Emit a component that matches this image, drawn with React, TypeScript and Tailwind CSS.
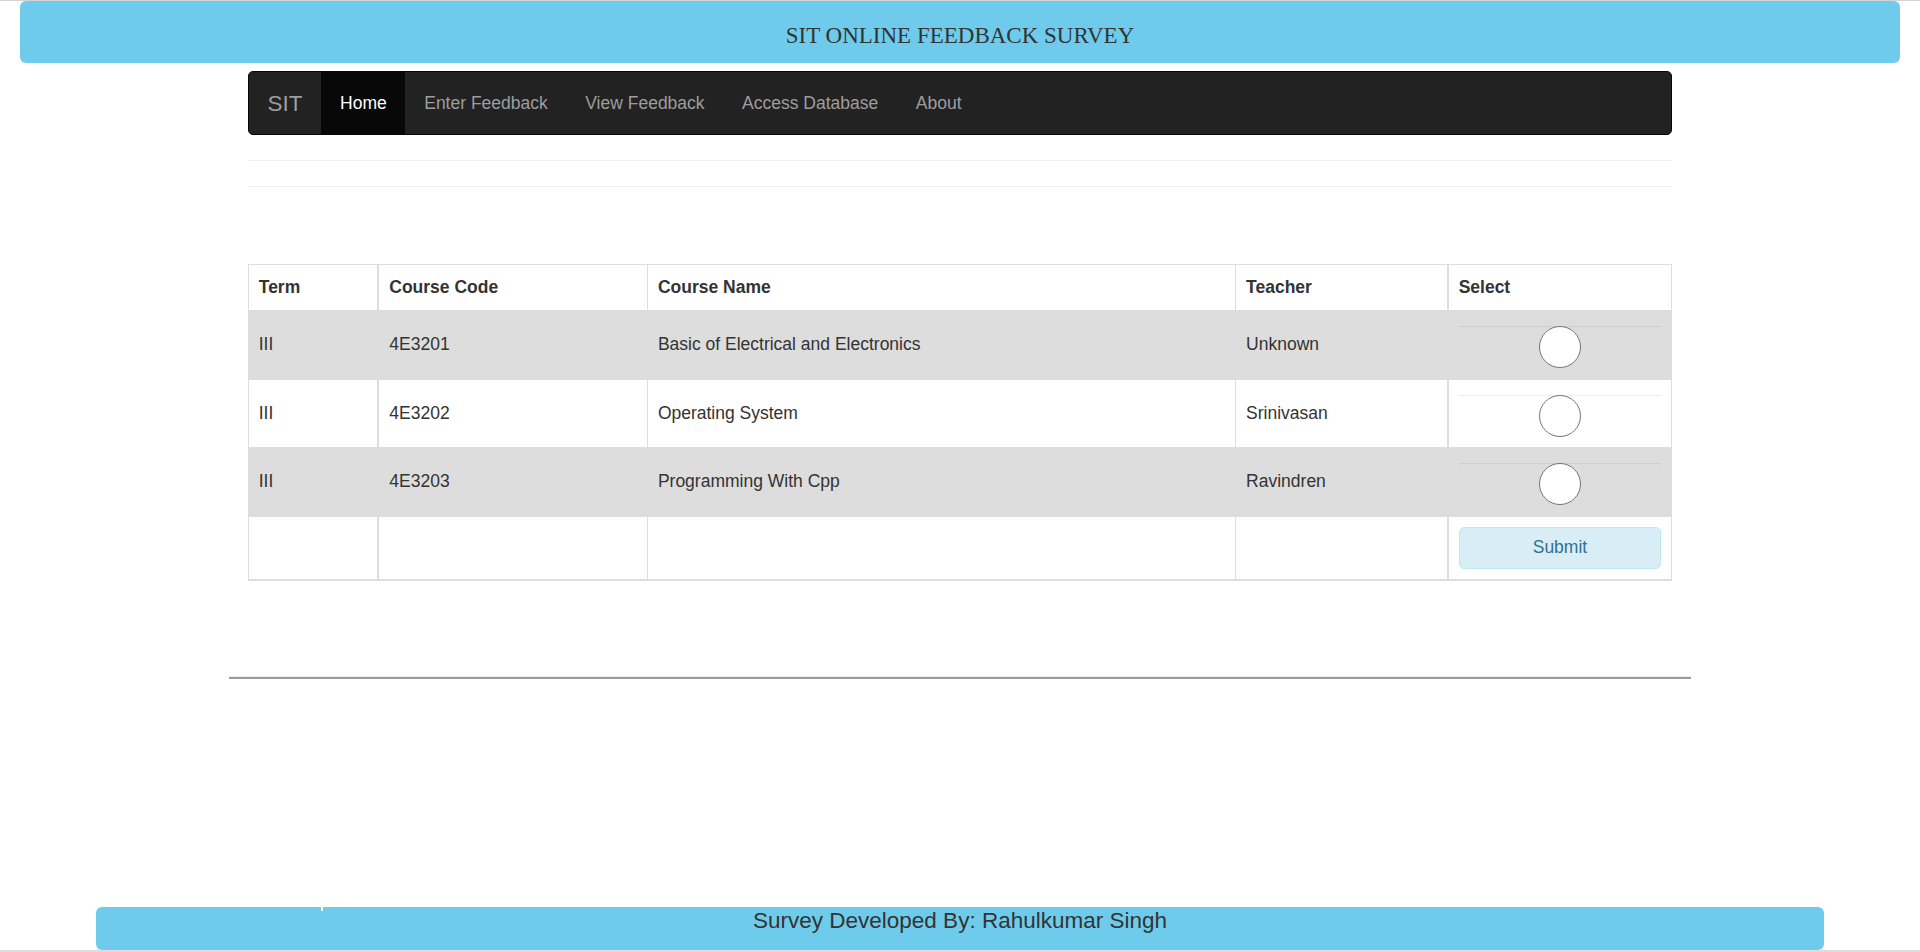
import React from "react";

const navLinks = [
  { label: "Home", active: true },
  { label: "Enter Feedback", active: false },
  { label: "View Feedback", active: false },
  { label: "Access Database", active: false },
  { label: "About", active: false },
];

const courses = [
  { term: "III", code: "4E3201", name: "Basic of Electrical and Electronics", teacher: "Unknown" },
  { term: "III", code: "4E3202", name: "Operating System", teacher: "Srinivasan" },
  { term: "III", code: "4E3203", name: "Programming With Cpp", teacher: "Ravindren" },
];

// el radio grande con la sombra inset del form-control
const RadioBox = () => (
  <div className="mt-[5px] flex h-[42.5px] w-full items-center justify-center shadow-[inset_0_1px_1px_rgba(0,0,0,0.075)]">
    <span className="block h-[42px] w-[42px] rounded-full border-[1.5px] border-[#767676] bg-white" />
  </div>
);

const cell = "border border-[#dddddd] px-[10px] py-[10px] text-left leading-[25px]";

const App = () => {
  return (
    <div className="flex min-h-screen flex-col bg-white font-['Liberation_Sans',Arial,sans-serif] text-[17.5px] text-[#333333]">
      {/* línea superior */}
      <div className="h-px w-full bg-[#d4d4d4]" />

      {/* ===== HEADER ===== */}
      <header className="mx-[20px] h-[62px] rounded-[6px] bg-[#6ecbec] pt-[22px] text-center">
        <h1 className="font-['Liberation_Serif','Times_New_Roman',serif] text-[23px] leading-[25px] text-[#333333]">
          SIT ONLINE FEEDBACK SURVEY
        </h1>
      </header>

      <div className="mx-auto w-[1462px]">
        <div className="px-[18.75px]">
          {/* ===== NAVBAR ===== */}
          <nav className="mt-[8px] flex h-[64px] items-stretch rounded-[5px] border border-[#080808] bg-[#222222]">
            <a className="flex items-center px-[18.75px] text-[22.5px] leading-[25px] text-[#9d9d9d]">SIT</a>
            <ul className="flex items-stretch">
              {navLinks.map((link) => (
                <li key={link.label} className="flex">
                  <a
                    className={`flex items-center px-[18.75px] leading-[25px] ${
                      link.active ? "bg-[#080808] text-white" : "text-[#9d9d9d]"
                    }`}
                  >
                    {link.label}
                  </a>
                </li>
              ))}
            </ul>
          </nav>

          <hr className="mt-[25px] border-t border-[#eeeeee]" />
          <hr className="mt-[25px] border-t border-[#eeeeee]" />

          {/* ===== TABLA ===== */}
          <table className="mt-[77px] w-full table-fixed border-collapse">
            <colgroup>
              <col className="w-[130px]" />
              <col className="w-[269px]" />
              <col className="w-[588px]" />
              <col className="w-[212px]" />
              <col className="w-[224px]" />
            </colgroup>
            <thead>
              <tr>
                <th className={`${cell} align-top font-bold`}>Term</th>
                <th className={`${cell} border-l-2 align-top font-bold`}>Course Code</th>
                <th className={`${cell} align-top font-bold`}>Course Name</th>
                <th className={`${cell} align-top font-bold`}>Teacher</th>
                <th className={`${cell} border-l-2 align-top font-bold`}>Select</th>
              </tr>
            </thead>
            <tbody>
              {courses.map((c, idx) => (
                <tr key={c.code} className={idx % 2 === 0 ? "bg-[#dddddd]" : "bg-white"}>
                  <td className={`${cell} align-middle`}>{c.term}</td>
                  <td className={`${cell} border-l-2 align-middle`}>{c.code}</td>
                  <td className={`${cell} align-middle`}>{c.name}</td>
                  <td className={`${cell} align-middle`}>{c.teacher}</td>
                  <td className={`${cell} border-l-2 align-top`}>
                    <RadioBox />
                  </td>
                </tr>
              ))}
              <tr>
                <td className={`${cell} border-b-2`} />
                <td className={`${cell} border-b-2 border-l-2`} />
                <td className={`${cell} border-b-2`} />
                <td className={`${cell} border-b-2`} />
                <td className={`${cell} border-b-2 border-l-2 align-top`}>
                  <button className="h-[42.5px] w-full rounded-[5px] border border-[#bce8f1] bg-[#d9edf7] text-[17.5px] text-[#31708f]">
                    Submit
                  </button>
                </td>
              </tr>
            </tbody>
          </table>
        </div>

        <div className="mt-[95px] h-[3px] border-t border-[#eeeeee] border-b-2 border-b-[#999999]" />
      </div>

      {/* ===== FOOTER ===== */}
      <footer className="relative mx-auto mt-auto h-[43px] w-[90%] rounded-[6px] bg-[#6ecbec] pt-[2px] text-center">
        <span className="absolute left-[225px] top-0 h-[4px] w-[2px] bg-white" />
        <h4 className="text-[22.5px] leading-[24.75px] text-[#333333]">Survey Developed By: Rahulkumar Singh</h4>
      </footer>
      <div className="h-[2px] w-full bg-[#dcdcdc]" />
    </div>
  );
};

export default App;
